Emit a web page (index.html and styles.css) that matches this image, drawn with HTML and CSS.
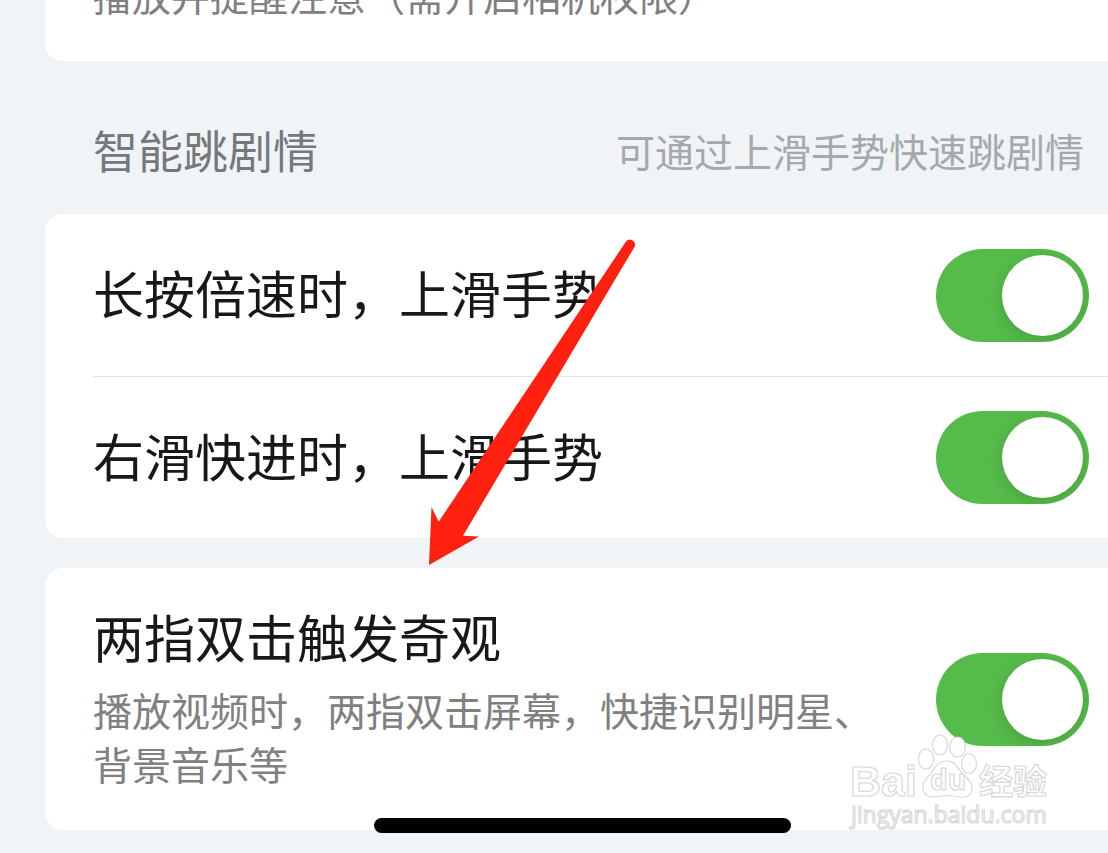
FILE: index.html
```html
<!DOCTYPE html>
<html lang="zh-CN">
<head>
    <meta charset="UTF-8">
    <meta name="viewport" content="width=device-width, initial-scale=1.0">
    <title>播放设置</title>
    <link rel="stylesheet" href="styles.css">
</head>
<body>
    <main class="settings">
        <section class="card">
            <div class="row">
                <p class="desc">播放并提醒注意（需开启相机权限）</p>
            </div>
        </section>

        <header class="section-head">
            <h2>智能跳剧情</h2>
            <p class="note">可通过上滑手势快速跳剧情</p>
        </header>
        <section class="card">
            <div class="row">
                <label class="title" for="long-press">长按倍速时，上滑手势</label>
                <input class="switch" type="checkbox" id="long-press" checked>
            </div>
            <div class="row">
                <label class="title" for="swipe-right">右滑快进时，上滑手势</label>
                <input class="switch" type="checkbox" id="swipe-right" checked>
            </div>
        </section>

        <section class="card card-gap">
            <div class="row">
                <div class="text">
                    <label class="title" for="two-finger">两指双击触发奇观</label>
                    <p class="desc">播放视频时，两指双击屏幕，快捷识别明星、背景音乐等</p>
                </div>
                <input class="switch" type="checkbox" id="two-finger" checked>
            </div>
        </section>
    </main>

    <!-- red pointer arrow -->
    <svg class="arrow" width="52" height="328" viewBox="428 238 52 328" aria-hidden="true">
        <path d="M429 565 L431.5 507 L438.7 521.7 L626 241.5 A5.2 5.2 0 0 1 635 246 L463 535.7 L479 536.5 Z" fill="#ff2010"/>
    </svg>

    <svg class="watermark" width="204" height="100" viewBox="848 732 204 100">
        <g fill="#fff" stroke="#d8d8d8" stroke-width="1.2">
            <text class="wm-latin" x="850" y="796" font-size="43">Bai</text>
            <ellipse cx="926" cy="759" rx="7.5" ry="10"/>
            <ellipse cx="940" cy="745" rx="7.5" ry="10"/>
            <ellipse cx="957.5" cy="747" rx="8" ry="10"/>
            <ellipse cx="969" cy="763.5" rx="7.5" ry="10"/>
            <path d="M947 761 C956 761 957 768 963 774 C969 780 973 784 972 789 C971 796 966 798 960 797 C955 796 951 795.5 947 795.5 C942 795.5 938 797 933 797 C926 797 922 792 923 785 C924 779 929 777 933 770 C937 764 940 761 947 761 Z"/>
            <text class="wm-du" x="930" y="790" font-size="28">du</text>
            <text class="wm-cjk" x="979" y="794" font-size="34">经验</text>
            <text class="wm-url" x="851" y="823" font-size="23">jingyan.baidu.com</text>
        </g>
    </svg>

    <div class="home-bar"></div>
</body>
</html>
```
FILE: styles.css
```css
* {
    box-sizing: border-box;
}

body {
    position: relative;
    margin: 0;
    height: 100vh;
    overflow: hidden;
    background-color: #f0f4f7;
    color: #181818;
    font-family: "Liberation Sans", "Noto Sans CJK SC", sans-serif;
}

h2,
p {
    margin: 0;
    font-weight: normal;
}

/* list is scrolled, the first card is cut by the top edge */
.settings {
    margin-top: -101px;
    padding-left: 45px;
}

.card {
    background-color: #fff;
    border-radius: 18px 0 0 18px;
    padding-left: 48px;
}

.card-gap {
    margin-top: 30px;
}

.row {
    display: flex;
    align-items: center;
    justify-content: space-between;
    min-height: 162px;
    padding: 36px 19px 36px 0;
}

.row:only-child {
    align-items: flex-end;
}

.row:only-child .switch {
    align-self: center;
}

.row + .row {
    border-top: 1px solid #e2e3e5;
}

.text {
    display: flex;
    flex-direction: column;
    gap: 12px;
    max-width: 800px;
}

.title {
    padding-top: 4px;
    font-size: 51px;
    line-height: 66px;
}

.desc {
    font-size: 39px;
    line-height: 54px;
    color: #808080;
}

.section-head {
    display: flex;
    align-items: center;
    justify-content: space-between;
    padding: 59px 24px 26px 48px;
}

.section-head h2 {
    font-size: 45px;
    line-height: 68px;
    color: #75797c;
}

.note {
    font-size: 39px;
    line-height: 54px;
    color: #a6a9ac;
}

.switch {
    appearance: none;
    flex: none;
    display: flex;
    justify-content: flex-end;
    width: 153px;
    height: 93px;
    margin: -2px 0;
    padding: 6px;
    border-radius: 47px;
    background-color: #55bb4a;
    overflow: hidden;
}

.switch::before {
    content: "";
    width: 81px;
    height: 81px;
    border-radius: 50%;
    background-color: #fff;
    box-shadow: 0 4px 16px rgba(0, 0, 0, 0.15);
}

.switch:not(:checked) {
    justify-content: flex-start;
    background-color: #ddd;
}

.arrow {
    position: absolute;
    left: 428px;
    top: 238px;
    overflow: visible;
}

.watermark {
    position: absolute;
    right: 56px;
    top: 732px;
    overflow: visible;
}

.wm-latin {
    font-family: "Liberation Sans", sans-serif;
    font-weight: bold;
}

.wm-du {
    font-family: "Open Sans", sans-serif;
    font-weight: bold;
}

.wm-cjk {
    font-family: "Noto Sans CJK SC", sans-serif;
    font-weight: bold;
}

.wm-url {
    font-family: "Open Sans", sans-serif;
}

.home-bar {
    position: absolute;
    left: 374px;
    bottom: 20px;
    width: 417px;
    height: 15px;
    border-radius: 8px;
    background-color: #000;
}
```
